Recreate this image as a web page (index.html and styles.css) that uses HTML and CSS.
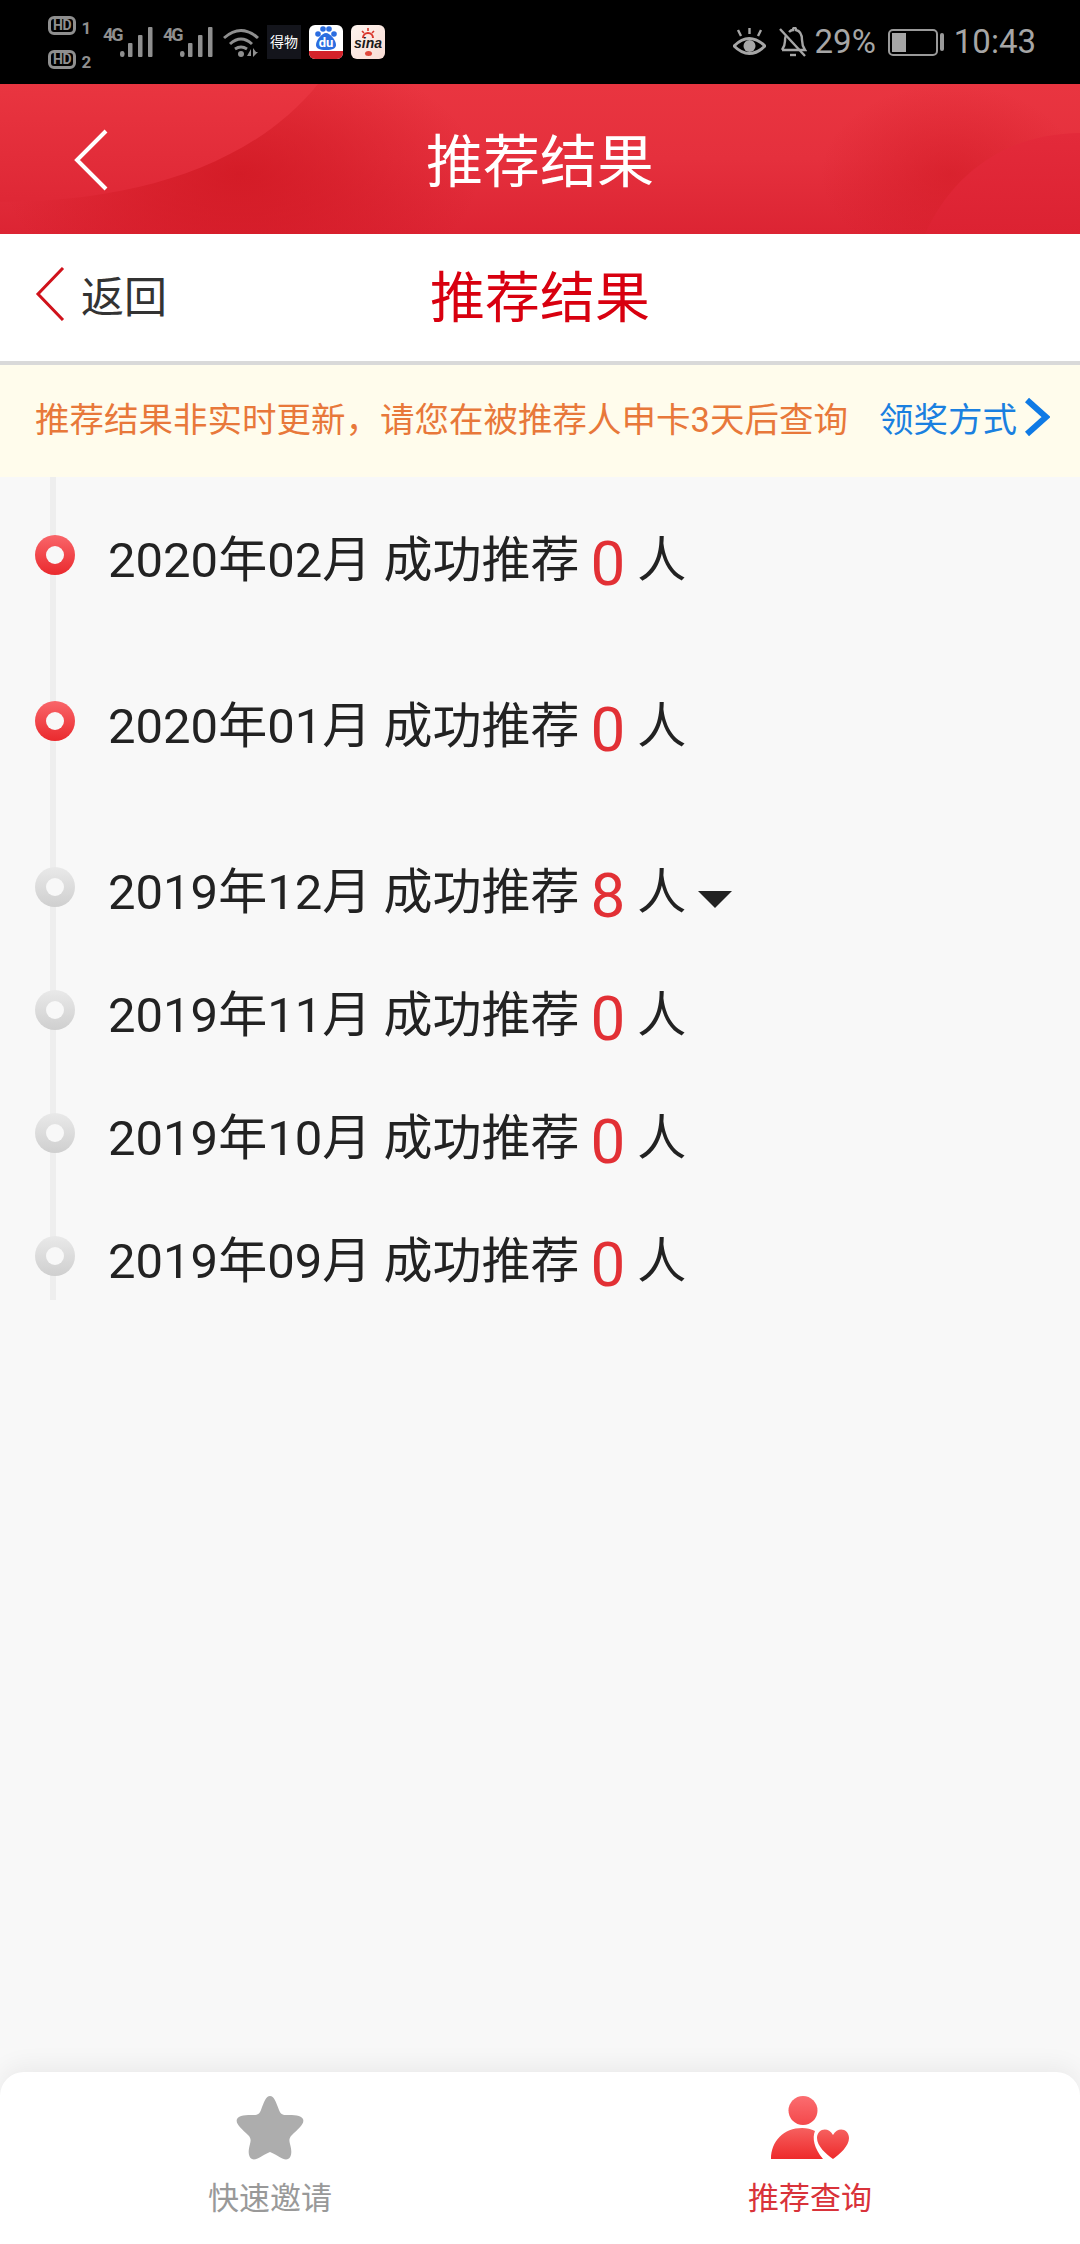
FILE: index.html
```html
<!DOCTYPE html>
<html lang="zh-CN">
<head>
    <meta charset="UTF-8">
    <meta name="viewport" content="width=device-width, initial-scale=1.0">
    <title>推荐结果</title>
    <link rel="stylesheet" href="styles.css">
</head>
<body>
<div class="page">
    <div class="status-bar">
        <div class="status-left">
            <div class="hd-stack">
                <div class="hd-row"><span class="hd-badge">HD</span><span class="hd-num">1</span></div>
                <div class="hd-row"><span class="hd-badge">HD</span><span class="hd-num">2</span></div>
            </div>
            <div class="signal">
                <span class="signal-label">4G</span>
                <svg width="33" height="30" viewBox="0 0 33 30"><rect x="0" y="24" width="4.5" height="6" rx="2.2" fill="#8f8f8f"/><rect x="8" y="16" width="4.5" height="14" rx="1" fill="#8f8f8f"/><rect x="18" y="8" width="4.5" height="22" rx="1" fill="#8f8f8f"/><rect x="28" y="0" width="4.5" height="30" rx="1" fill="#8f8f8f"/></svg>
            </div>
            <div class="signal">
                <span class="signal-label">4G</span>
                <svg width="33" height="30" viewBox="0 0 33 30"><rect x="0" y="24" width="4.5" height="6" rx="2.2" fill="#8f8f8f"/><rect x="8" y="16" width="4.5" height="14" rx="1" fill="#8f8f8f"/><rect x="18" y="8" width="4.5" height="22" rx="1" fill="#8f8f8f"/><rect x="28" y="0" width="4.5" height="30" rx="1" fill="#8f8f8f"/></svg>
            </div>
            <svg class="wifi" width="36" height="30" viewBox="0 0 36 30"><path d="M1 11Q18-4 35 11M7 17Q18 7 29 17M12 22Q18 18 24 22" fill="none" stroke="#8f8f8f" stroke-width="3"/><circle cx="18" cy="27" r="3" fill="#8f8f8f"/><path d="M24 29l4-7v7zM30 21v9l5-5h-2z" fill="#8f8f8f"/></svg>
            <div class="app-icon app-dewu">得物</div>
            <div class="app-icon app-du">
                <svg width="34" height="26" viewBox="0 0 34 26"><circle cx="9" cy="9" r="2.8" fill="#2b6de0"/><circle cx="14" cy="4" r="2.8" fill="#2b6de0"/><circle cx="20" cy="4" r="2.8" fill="#2b6de0"/><circle cx="25" cy="9" r="2.8" fill="#2b6de0"/><path d="M17 8c-4 0-10 7-10 12 0 3 3 5 10 5s10-2 10-5c0-5-6-12-10-12z" fill="#2b6de0"/></svg>
                <span class="du-label">du</span>
                <div class="du-bar"></div>
            </div>
            <div class="app-icon app-sina">
                <svg class="sina-logo" width="16" height="12" viewBox="0 0 16 12"><path d="M3 11a5 5 0 0 1 10 0" fill="none" stroke="#d9352b" stroke-width="2"/><path d="M2 4l2 2M8 1v3M14 4l-2 2" stroke="#d9352b" stroke-width="1.6"/></svg>
                <span class="sina-label">sina</span>
                <div class="sina-dot"></div>
            </div>
        </div>
        <div class="status-right">
            <svg class="eye" width="33" height="29" viewBox="0 0 33 29"><path d="M1 18Q16 3 32 18Q16 33 1 18z" fill="none" stroke="#a6a6a6" stroke-width="3"/><circle cx="16.500" cy="18" r="6" fill="#a6a6a6"/><path d="M16.500 0v6M5 2l3 6M28 2l-3 6" stroke="#a6a6a6" stroke-width="2.4"/></svg>
            <svg class="bell" width="28" height="30" viewBox="0 0 28 30"><path d="M3 23c2-3 3-5 3-9 0-2 0-4 1-5M10 5c1-1 2-2 4-2 0-3 3-3 3 0 4 1 6 5 6 10 0 5 1 7 3 10H3" fill="none" stroke="#a6a6a6" stroke-width="2.4"/><path d="M1 2l25 27" stroke="#a6a6a6" stroke-width="2.4"/><path d="M11 28h6" stroke="#a6a6a6" stroke-width="2.4"/></svg>
            <span class="status-text">29%</span>
            <div class="battery">
                <div class="battery-body"><div class="battery-level"></div></div>
                <div class="battery-tip"></div>
            </div>
            <span class="status-text status-time">10:43</span>
        </div>
    </div>

    <div class="app-header">
        <svg class="header-shapes" width="1080" height="150" viewBox="0 0 1080 150">
            <defs>
                <linearGradient id="shapeLeft" gradientUnits="userSpaceOnUse" x1="0" y1="0" x2="0" y2="150"><stop offset="0" stop-color="#e93540"/><stop offset="1" stop-color="#dc2433"/></linearGradient>
                <linearGradient id="shapeRight" gradientUnits="userSpaceOnUse" x1="0" y1="50" x2="0" y2="150"><stop offset="0" stop-color="#e32a3a"/><stop offset="1" stop-color="#dc2232"/></linearGradient>
            </defs>
            <path d="M0 0H318C250 84 130 118 0 118z" fill="url(#shapeLeft)"/>
            <path d="M1080 49C1000 50 950 95 925 150H1080z" fill="url(#shapeRight)"/>
        </svg>
        <svg class="header-back" width="36" height="62" viewBox="0 0 36 62"><path d="M33 2L4 31l29 29" fill="none" stroke="#fff" stroke-width="4"/></svg>
        <h1 class="app-title">推荐结果</h1>
    </div>

    <div class="sub-header">
        <div class="back-link">
            <svg width="30" height="54" viewBox="0 0 30 54"><path d="M28 1L3 27l25 26" fill="none" stroke="#d0121b" stroke-width="3"/></svg>
            <span>返回</span>
        </div>
        <h2 class="sub-title">推荐结果</h2>
    </div>

    <div class="notice">
        <span class="notice-text">推荐结果非实时更新，请您在被推荐人申卡3天后查询</span>
        <div class="notice-link">
            <span>领奖方式</span>
            <svg width="26" height="40" viewBox="0 0 26 40"><path d="M3 3l19 17L3 37" fill="none" stroke="#0f7ae5" stroke-width="6"/></svg>
        </div>
    </div>

    <div class="content">
        <div class="timeline">
            <div class="row row-tall">
                <div class="dot dot-on"></div>
                <span class="date">2020年02月 成功推荐</span><span class="count">0</span><span class="unit">人</span>
            </div>
            <div class="row row-tall">
                <div class="dot dot-on"></div>
                <span class="date">2020年01月 成功推荐</span><span class="count">0</span><span class="unit">人</span>
            </div>
            <div class="row">
                <div class="dot"></div>
                <span class="date">2019年12月 成功推荐</span><span class="count">8</span><span class="unit">人</span><div class="caret"></div>
            </div>
            <div class="row">
                <div class="dot"></div>
                <span class="date">2019年11月 成功推荐</span><span class="count">0</span><span class="unit">人</span>
            </div>
            <div class="row">
                <div class="dot"></div>
                <span class="date">2019年10月 成功推荐</span><span class="count">0</span><span class="unit">人</span>
            </div>
            <div class="row">
                <div class="dot"></div>
                <span class="date">2019年09月 成功推荐</span><span class="count">0</span><span class="unit">人</span>
            </div>
        </div>
    </div>

    <div class="tabbar">
        <div class="tab">
            <svg width="70" height="64" viewBox="0 0 70 64"><path d="M35 0c4 0 6 6 9 14 1 3 3 5 7 5 8 0 15 0 17 4 2 5-5 10-11 16-3 3-3 5-2 9 2 7 2 13-2 15-4 2-9-3-18-7-9 4-14 9-18 7-4-2-4-8-2-15 1-4 1-6-2-9C7 33 0 28 2 23c2-4 9-4 17-4 4 0 6-2 7-5 3-8 5-14 9-14z" fill="#adadad"/></svg>
            <span class="tab-label">快速邀请</span>
        </div>
        <div class="tab tab-active">
            <svg width="80" height="64" viewBox="0 0 80 64">
                <defs>
                    <linearGradient id="headFill" x1="0" y1="0" x2="0" y2="1"><stop offset="0" stop-color="#fb6d70"/><stop offset="1" stop-color="#f4484b"/></linearGradient>
                    <linearGradient id="bodyFill" x1="0" y1="0" x2="0" y2="1"><stop offset="0" stop-color="#f6605f"/><stop offset="1" stop-color="#ee2a2b"/></linearGradient>
                </defs>
                <circle cx="33" cy="14.500" r="14.500" fill="url(#headFill)"/>
                <path d="M1 63C1 45 14 32 32 32c5 0 9 1 13 3-3 7-1 17 8 28z" fill="url(#bodyFill)"/>
                <path d="M63 63C56 58 47 50 47 42c0-9 11-12 16-3 5-9 16-6 16 3 0 8-9 16-16 21z" fill="url(#bodyFill)"/>
            </svg>
            <span class="tab-label">推荐查询</span>
        </div>
    </div>
</div>
</body>
</html>
```

FILE: styles.css
```css
* {
    box-sizing: border-box;
}
html, body {
    margin: 0;
    padding: 0;
}
body {
    font-family: Roboto, "Noto Sans CJK SC", sans-serif;
    background-color: #f8f8f8;
}
h1, h2 {
    margin: 0;
    font-weight: 400;
}
.page {
    width: 1080px;
    height: 2244px;
    display: flex;
    flex-direction: column;
    overflow: hidden;
}

/* status bar */
.status-bar {
    height: 84px;
    background-color: #000;
    display: flex;
    justify-content: space-between;
    align-items: center;
    padding: 0 44px 0 48px;
}
.status-left, .status-right {
    display: flex;
    align-items: center;
}
.hd-stack {
    display: flex;
    flex-direction: column;
    gap: 15px;
    margin-right: 11px;
}
.hd-row {
    display: flex;
    align-items: flex-end;
    gap: 5px;
    height: 19px;
    color: #8f8f8f;
    font-weight: 700;
}
.hd-badge {
    width: 28px;
    height: 19px;
    border: 3px solid #8f8f8f;
    border-radius: 6px;
    font-size: 14px;
    line-height: 13px;
    text-align: center;
    letter-spacing: -0.5px;
}
.hd-num {
    width: 11px;
    font-size: 17px;
    line-height: 14px;
    text-align: center;
}
.signal {
    display: flex;
    margin-right: 10px;
}
.signal-label {
    font-size: 18px;
    font-weight: 700;
    color: #8f8f8f;
    letter-spacing: -2px;
    line-height: 16px;
    width: 17px;
}
.wifi {
    margin-right: 8px;
}
.app-icon {
    width: 34px;
    height: 34px;
    margin-right: 8px;
    overflow: hidden;
}
.app-dewu {
    background-color: #14151c;
    color: #fff;
    font-size: 14px;
    line-height: 34px;
    text-align: center;
}
.app-du {
    background-color: #fff;
    border-radius: 6px;
    position: relative;
}
.du-label {
    position: absolute;
    left: 0;
    right: 0;
    top: 11px;
    text-align: center;
    font-size: 13px;
    line-height: 13px;
    font-weight: 700;
    color: #fff;
}
.du-bar {
    position: absolute;
    left: 0;
    right: 0;
    bottom: 0;
    height: 8px;
    background-color: #d3222a;
}
.app-sina {
    background: linear-gradient(135deg, #fdf3ee, #f9dcd4);
    border-radius: 6px;
    margin-right: 0;
    position: relative;
}
.sina-logo {
    position: absolute;
    left: 9px;
    top: 2px;
}
.sina-label {
    position: absolute;
    left: 0;
    right: 0;
    top: 11px;
    color: #1a1a1a;
    font-family: "Liberation Sans", sans-serif;
    font-size: 14px;
    line-height: 14px;
    font-weight: 700;
    font-style: italic;
    text-align: center;
}
.sina-dot {
    position: absolute;
    left: 14px;
    top: 26px;
    width: 7px;
    height: 5px;
    border-radius: 50%;
    background-color: #e0483c;
}
.eye {
    margin-right: 13px;
}
.bell {
    margin-right: 8px;
}
.status-text {
    font-size: 33px;
    color: #a6a6a6;
    line-height: 40px;
}
.status-time {
    margin-left: 10px;
}
.battery {
    display: flex;
    align-items: center;
    margin-left: 12px;
    gap: 2px;
}
.battery-body {
    width: 50px;
    height: 27px;
    border: 2px solid #9a9a9a;
    border-radius: 5px;
    padding: 2px;
}
.battery-level {
    width: 14px;
    height: 100%;
    background-color: #a6a6a6;
}
.battery-tip {
    width: 4px;
    height: 18px;
    background-color: #9a9a9a;
    border-radius: 2px;
}

/* red app header */
.app-header {
    height: 150px;
    position: relative;
    display: flex;
    align-items: center;
    justify-content: center;
    overflow: hidden;
    background:
        radial-gradient(ellipse 240px 130px at 240px 90px, rgba(205,20,30,0.7) 0, rgba(205,20,30,0.45) 40%, rgba(205,20,30,0) 100%),
        radial-gradient(ellipse 130px 90px at 950px 90px, rgba(205,20,30,0.45) 0, rgba(205,20,30,0) 100%),
        linear-gradient(to bottom, #e93540 0%, #e5303d 50%, #dc2433 100%);
}
.header-shapes {
    position: absolute;
    left: 0;
    top: 0;
}
.header-back {
    position: absolute;
    left: 73px;
    top: 45px;
}
.app-title {
    font-size: 57px;
    color: #fff;
    line-height: 72px;
    margin-top: 8px;
    position: relative;
}

/* white title bar */
.sub-header {
    height: 131px;
    background-color: #fff;
    border-bottom: 4px solid #d9d9d9;
    position: relative;
    display: flex;
    align-items: center;
    justify-content: center;
}
.back-link {
    position: absolute;
    left: 35px;
    top: 29px;
    display: flex;
    align-items: center;
    gap: 16px;
    font-size: 43px;
    color: #333;
}
.sub-title {
    font-size: 55px;
    color: #d8000f;
    line-height: 70px;
}

/* notice strip */
.notice {
    height: 112px;
    background-color: #fffcec;
    display: flex;
    justify-content: space-between;
    align-items: center;
    padding: 0 30px 8px 35px;
}
.notice-text {
    font-size: 34.500px;
    color: #e8783a;
}
.notice-link {
    display: flex;
    align-items: center;
    gap: 7px;
    font-size: 34.500px;
    color: #1a80e0;
}

/* timeline */
.content {
    flex: 1;
}
.timeline {
    margin-left: 50px;
    width: 1030px;
    height: 823px;
    border-left: 6px solid #eeeeee;
    padding-top: 58px;
}
.row {
    height: 123px;
    margin-left: -21px;
    display: flex;
    align-items: flex-start;
    color: #222;
    font-size: 49px;
    line-height: 49px;
}
.row-tall {
    height: 166px;
}
.dot {
    width: 40px;
    height: 40px;
    border-radius: 50%;
    background: linear-gradient(to bottom, #e9e9e9, #cfcfcf);
    display: flex;
    align-items: center;
    justify-content: center;
    margin-right: 33px;
}
.dot::after {
    content: "";
    width: 18px;
    height: 18px;
    border-radius: 50%;
    background-color: #f8f8f8;
}
.dot-on {
    background: linear-gradient(to bottom, #f9666a, #ea2a2e);
}
.date {
    margin-top: 1px;
    white-space: nowrap;
}
.count {
    font-size: 62px;
    line-height: 60px;
    color: #e23035;
    margin: -1px 12px 0 11px;
}
.unit {
    margin-top: 1px;
}
.caret {
    width: 0;
    height: 0;
    border-left: 17px solid transparent;
    border-right: 17px solid transparent;
    border-top: 17px solid #222;
    margin: 24px 0 0 12px;
}

/* bottom tabs */
.tabbar {
    height: 172px;
    background-color: #fff;
    border-radius: 24px 24px 0 0;
    box-shadow: 0 -6px 24px rgba(0,0,0,0.06);
    display: flex;
}
.tab {
    flex: 1;
    display: flex;
    flex-direction: column;
    align-items: center;
    padding-top: 24px;
}
.tab-label {
    font-size: 31px;
    line-height: 40px;
    margin-top: 19px;
    color: #999;
}
.tab-active .tab-label {
    color: #d9333a;
}
```
